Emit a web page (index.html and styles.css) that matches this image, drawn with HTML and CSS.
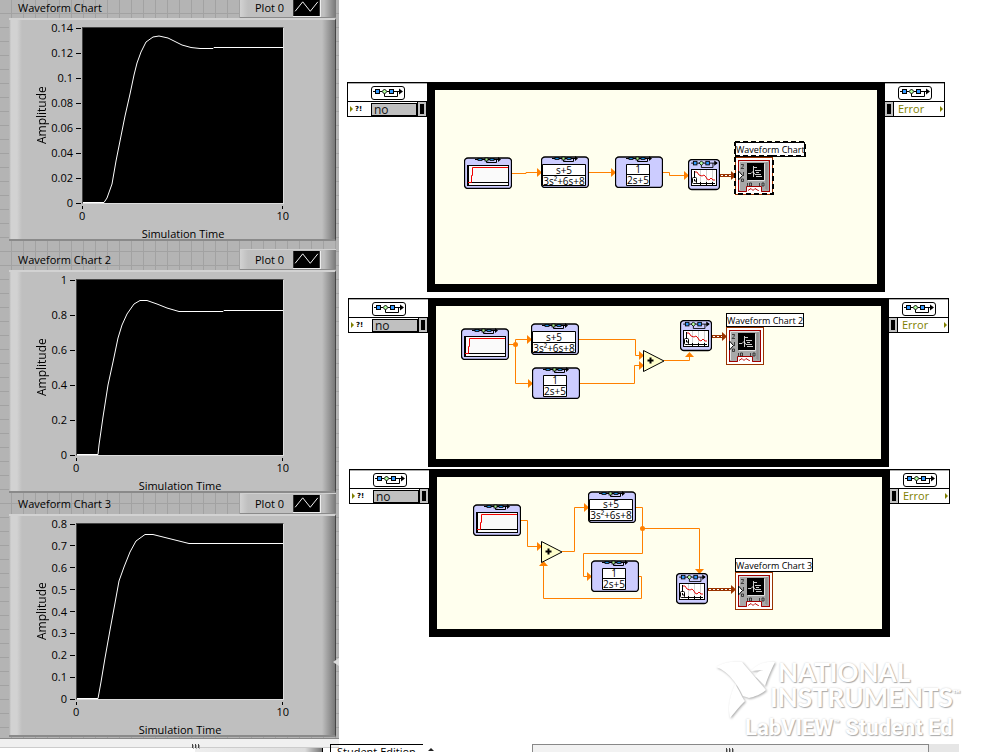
FILE: index.html
```html
<!DOCTYPE html>
<html lang="en">
<head>
<meta charset="utf-8">
<title>LabVIEW Simulation</title>
<link rel="stylesheet" href="styles.css">
</head>
<body>
<svg class="defs" aria-hidden="true">
  <defs>
    <symbol id="chain" viewBox="0 0 30 9">
      <path d="M0 3.500H29M11.500 3.500V8.500H24.500V3.500" fill="none" stroke="#000"/>
      <path d="M26 0.500L30 3.500L26 6.500Z"/>
      <rect x="2.500" y="1.500" width="4" height="4" fill="#3399ff" stroke="#000"/>
      <rect x="16.500" y="1.500" width="4" height="4" fill="#3399ff" stroke="#000"/>
      <path d="M11.500 1L14 3.500L11.500 6L9 3.500Z" fill="#b4ffa0" stroke="#000"/>
    </symbol>
    <symbol id="chain-box" viewBox="0 0 34 14">
      <rect x="0.500" y="0.500" width="33" height="13" rx="2.500" fill="#fff" stroke="#000"/>
      <use href="#chain" x="2" y="2" width="30" height="9"/>
    </symbol>
    <symbol id="block" viewBox="0 0 48 32">
      <rect x="0.500" y="1" width="47" height="30.500" rx="3.500" fill="#ccccff" stroke="#000" stroke-width="1.300"/>
      <path d="M11 2.500H36M22.500 3V5.500H32.500V3" fill="none" stroke="#000"/>
      <rect x="14" y="1.500" width="4" height="2" fill="#1684d8" stroke="#000" stroke-width="0.800"/>
      <rect x="26" y="1.500" width="4" height="2" fill="#1684d8" stroke="#000" stroke-width="0.800"/>
      <rect x="21" y="1" width="3" height="3" fill="#a4e68a" stroke="#000" stroke-width="0.800"/>
      <path d="M34 0L37 2.500L34 5Z"/>
    </symbol>
    <symbol id="step" viewBox="0 0 48 32">
      <use href="#block" width="48" height="32"/>
      <rect x="3.500" y="8.500" width="41" height="20" fill="#fafafa" stroke="#000"/>
      <path d="M4.500 8V29M4 25.500H44" fill="none" stroke="#000"/>
      <path d="M4 25.500H7.500V18.500H8.500V10.500H44" fill="none" stroke="#f00000"/>
    </symbol>
    <symbol id="scope" viewBox="0 0 32 32">
      <rect x="0.500" y="0.500" width="31" height="30" rx="3.500" fill="#ccccff" stroke="#000" stroke-width="1.300"/>
      <use href="#chain" x="3" y="1" width="27" height="8"/>
      <rect x="3.500" y="10.500" width="25" height="16" fill="#fff" stroke="#000"/>
      <path d="M12.500 11V24M18.500 11V24M24.500 11V24" stroke="#d0d0d0"/>
      <path d="M6.500 12V25M7 24.500H27M12.500 23V26M18.500 23V26M24.500 23V26" stroke="#000"/>
      <path d="M7 13L9 13L11 16L14 17L16 16L18 18L19 20L21 21L23 19L25 21H27" fill="none" stroke="#e01010"/>
      <rect x="4.500" y="18.500" width="4" height="6" rx="1" fill="#fff" stroke="#000"/>
      <path d="M6.500 20V22H8" fill="none" stroke="#000"/>
    </symbol>
    <symbol id="terminal" viewBox="0 0 38 38">
      <rect x="0.500" y="0.500" width="37" height="37" fill="#fff" stroke="#993300"/>
      <rect x="3.500" y="3.500" width="31" height="31" fill="#a8a8a8" stroke="#a00000"/>
      <path d="M4.500 33V4.500H33" fill="none" stroke="#e0e0e0"/>
      <path d="M32 5V33M31 6V32" fill="none" stroke="#888"/>
      <rect x="12" y="6" width="17" height="17" fill="#000"/>
      <path d="M29.500 7V23.500H13" fill="none" stroke="#ddd"/>
      <path d="M13 16.500H16L18 14.500L20 17.500H26M18.500 9V20M19 10.500H22M20 13.500H26M21 15.500H24M21 19.500H27" fill="none" stroke="#fff" stroke-width="0.800"/>
      <path d="M6 7.500H8.500L8 9.500L6 11.500H9M8.500 15V19M6.500 24.500H8.500V22H6.500ZM12.500 26V29M14.500 26H16.500V29H14.500ZM24.500 26V29M27 26H29V29H27Z" fill="none" stroke="#222" stroke-width="0.800"/>
      <path d="M3.500 14L7.500 18.500L3.500 23Z" fill="#fff" stroke="#000"/>
      <path d="M11.500 34.500V29.500H26.500V34.500" fill="#fff" stroke="#a00000"/>
      <path d="M13 33.500L16 31.500L18 33.500L20 31.500L24 34" fill="none" stroke="#c01010"/>
      <path d="M12 34.500H26" stroke="#fff"/>
    </symbol>
    <symbol id="sum" viewBox="0 0 22 22">
      <path d="M0.500 0.500L21 11L0.500 21.500Z" fill="#ffffcc" stroke="#000"/>
      <path d="M4.500 10.500H10.500M7.500 7.500V13.500" stroke="#000" stroke-width="2"/>
    </symbol>
    <symbol id="legend-line" viewBox="0 0 28 18">
      <rect width="28" height="18" fill="#000"/>
      <path d="M2 13L10 3L18 13L26 3" fill="none" stroke="#fff"/>
    </symbol>
    <symbol id="grip" viewBox="0 0 9 5">
      <path d="M0.500 0V4M3.500 0V4M6.500 0V4" stroke="#444"/>
      <path d="M1.500 1V5M4.500 1V5M7.500 1V5" stroke="#aaa"/>
    </symbol>
  </defs>
</svg>

<div class="workspace">
  <main class="front-panel">
    <section class="chart chart-first">
      <header class="chart-head">
        <h2 class="chart-title">Waveform Chart</h2>
        <div class="legend"><span>Plot 0</span><svg class="legend-line"><use href="#legend-line"/></svg></div>
      </header>
      <div class="chart-body wide-scale">
        <div class="y-label">Amplitude</div>
        <ol class="y-scale"><li>0.14</li><li>0.12</li><li>0.1</li><li>0.08</li><li>0.06</li><li>0.04</li><li>0.02</li><li>0</li></ol>
        <svg class="plot" viewBox="83 28 200 175" preserveAspectRatio="none"><path d="M83 202.500H104L107 198L112 184L116 161L120 141L125 116L130 94L134 75L137 63L141 52L146 42L153 37L159 36L168 38L174 41L182 45L191 47.500L200 48.500H213L214 47.500H283"/></svg>
        <div class="x-scale"><span>0</span><span>10</span></div>
        <div class="x-label">Simulation Time</div>
      </div>
    </section>
    <section class="chart">
      <header class="chart-head">
        <h2 class="chart-title">Waveform Chart 2</h2>
        <div class="legend"><span>Plot 0</span><svg class="legend-line"><use href="#legend-line"/></svg></div>
      </header>
      <div class="chart-body">
        <div class="y-label">Amplitude</div>
        <ol class="y-scale"><li>1</li><li>0.8</li><li>0.6</li><li>0.4</li><li>0.2</li><li>0</li></ol>
        <svg class="plot" viewBox="77 280 206 175" preserveAspectRatio="none"><path d="M77 454.500H98L99 445L103 417L108 385L113 362L118 338L122 325L127 314L134 304L140 300.500H147L157 304L167 308L179 311.500H223L224 310.500H283"/></svg>
        <div class="x-scale"><span>0</span><span>10</span></div>
        <div class="x-label">Simulation Time</div>
      </div>
    </section>
    <section class="chart chart-last">
      <header class="chart-head">
        <h2 class="chart-title">Waveform Chart 3</h2>
        <div class="legend"><span>Plot 0</span><svg class="legend-line"><use href="#legend-line"/></svg></div>
      </header>
      <div class="chart-body">
        <div class="y-label">Amplitude</div>
        <ol class="y-scale"><li>0.8</li><li>0.7</li><li>0.6</li><li>0.5</li><li>0.4</li><li>0.3</li><li>0.2</li><li>0.1</li><li>0</li></ol>
        <svg class="plot" viewBox="77 524 206 175" preserveAspectRatio="none"><path d="M77 698.500H98L101 682L105 658L110 630L115 603L119 581L124 567L130 552L136 541L145 534.500H153L167 538L189 543.500H283"/></svg>
        <div class="x-scale"><span>0</span><span>10</span></div>
        <div class="x-label">Simulation Time</div>
      </div>
    </section>
    <svg class="splitter" viewBox="0 0 6 8"><path d="M6 0L0 4L6 8Z" fill="#ddd"/></svg>
  </main>

  <section class="diagram">
    <article class="loop loop-1">
      <div class="node">
        <div class="node-top"><svg class="node-icon"><use href="#chain-box"/></svg></div>
        <div class="node-row"><i class="pin"></i><span class="mark">?!</span><input class="value" value="no" aria-label="Error in, loop 1"><span class="handle"></span></div>
      </div>
      <div class="frame">
        <svg viewBox="435 90 442 194">
          <g class="wire"><path d="M512 173.500H526V172.500H538M589 172.500H612M663 172.500H669.500V175.500H685"/></g>
          <g class="arrow"><path d="M537 168V177L542 172.500Z"/><path d="M611 168V177L616 172.500Z"/><path d="M684 171V180L689 175.500Z"/></g>
          <path class="bus" d="M720 175.500H732"/><path class="bus-dots" d="M721 175.500H732"/><path class="bus-head" d="M731 171V180L736 175.500Z"/>
          <use href="#step" x="464" y="157" width="48" height="32"/>
          <use href="#block" x="541" y="156" width="48" height="32"/>
          <path class="cell" d="M542.500 164.500H585.500V185.500H542.500ZM542 175.500H586"/>
          <text class="term" x="564" y="174">s+5</text><text class="term" x="564" y="185">3s²+6s+8</text>
          <use href="#block" x="615" y="156" width="48" height="32"/>
          <path class="cell" d="M626.500 164.500H649.500V185.500H626.500ZM626 174.500H650"/>
          <text class="term" x="638" y="173">1</text><text class="term" x="638" y="184">2s+5</text>
          <use href="#scope" x="688" y="159" width="32" height="32"/>
          <use href="#terminal" x="735" y="157" width="38" height="38"/>
          <rect class="tag" x="735.500" y="142.500" width="69" height="14"/><text class="tag-text" x="736" y="153">Waveform Chart</text>
          <path class="selection" d="M735 142H805V156H773V194H735V142M735 156H773"/>
        </svg>
      </div>
      <div class="node node-out">
        <div class="node-top"><svg class="node-icon"><use href="#chain-box"/></svg></div>
        <div class="node-row"><span class="handle"></span><span class="error">Error</span><i class="pin"></i></div>
      </div>
    </article>

    <article class="loop loop-2">
      <div class="node">
        <div class="node-top"><svg class="node-icon"><use href="#chain-box"/></svg></div>
        <div class="node-row"><i class="pin"></i><span class="mark">?!</span><input class="value" value="no" aria-label="Error in, loop 2"><span class="handle"></span></div>
      </div>
      <div class="frame">
        <svg viewBox="436 306 445 153">
          <g class="wire"><path d="M509 344.500H515.500M528 339.500H515.500V383.500H529M579 339.500H635.500V355.500H640M580 383.500H634.500V365.500H640M664 360.500H689.500V356"/></g>
          <g class="arrow"><circle cx="515.500" cy="344.500" r="2.500"/><path d="M527 335V344L532 339.500Z"/><path d="M528 379V388L533 383.500Z"/><path d="M639 351V360L644 355.500Z"/><path d="M639 361V370L644 365.500Z"/><path d="M685 357H694L689.500 352Z"/></g>
          <path class="bus" d="M712 336.500H723"/><path class="bus-dots" d="M713 336.500H723"/><path class="bus-head" d="M722 332V341L727 336.500Z"/>
          <use href="#step" x="461" y="328" width="48" height="32"/>
          <use href="#block" x="531" y="323" width="48" height="32"/>
          <path class="cell" d="M532.500 331.500H575.500V352.500H532.500ZM532 342.500H576"/>
          <text class="term" x="554" y="341">s+5</text><text class="term" x="554" y="352">3s²+6s+8</text>
          <use href="#block" x="532" y="367" width="48" height="32"/>
          <path class="cell" d="M543.500 375.500H566.500V396.500H543.500ZM543 385.500H567"/>
          <text class="term" x="555" y="384">1</text><text class="term" x="555" y="395">2s+5</text>
          <use href="#sum" x="643" y="350" width="22" height="22"/>
          <use href="#scope" x="680" y="320" width="32" height="32"/>
          <use href="#terminal" x="726" y="327" width="38" height="38"/>
          <rect class="tag" x="726.500" y="313.500" width="77" height="13"/><text class="tag-text" x="727" y="324">Waveform Chart 2</text>
        </svg>
      </div>
      <div class="node node-out">
        <div class="node-top"><svg class="node-icon"><use href="#chain-box"/></svg></div>
        <div class="node-row"><span class="handle"></span><span class="error">Error</span><i class="pin"></i></div>
      </div>
    </article>

    <article class="loop loop-3">
      <div class="node">
        <div class="node-top"><svg class="node-icon"><use href="#chain-box"/></svg></div>
        <div class="node-row"><i class="pin"></i><span class="mark">?!</span><input class="value" value="no" aria-label="Error in, loop 3"><span class="handle"></span></div>
      </div>
      <div class="frame">
        <svg viewBox="437 477 445 152">
          <g class="wire"><path d="M521 520.500H527.500V546.500H538M562 551.500H574.500V507.500H585M636 507.500H642.500V553.500H583.500V576.500H588M642.500 528.500H699.500V570M639 576.500H641.500V598.500H543.500V566"/></g>
          <g class="arrow"><circle cx="642.500" cy="528.500" r="2.500"/><path d="M537 542V551L542 546.500Z"/><path d="M584 503V512L589 507.500Z"/><path d="M587 572V581L592 576.500Z"/><path d="M695 569H704L699.500 574Z"/><path d="M539 566H548L543.500 561Z"/></g>
          <path class="bus" d="M708 589.500H732"/><path class="bus-dots" d="M709 589.500H732"/><path class="bus-head" d="M731 585V594L736 589.500Z"/>
          <use href="#step" x="473" y="504" width="48" height="32"/>
          <use href="#block" x="588" y="491" width="48" height="32"/>
          <path class="cell" d="M589.500 499.500H632.500V520.500H589.500ZM589 509.500H633"/>
          <text class="term" x="611" y="508">s+5</text><text class="term" x="611" y="519">3s²+6s+8</text>
          <use href="#block" x="591" y="560" width="48" height="32"/>
          <path class="cell" d="M602.500 568.500H625.500V589.500H602.500ZM602 578.500H626"/>
          <text class="term" x="614" y="577">1</text><text class="term" x="614" y="588">2s+5</text>
          <use href="#sum" x="541" y="541" width="22" height="22"/>
          <use href="#scope" x="676" y="573" width="32" height="32"/>
          <use href="#terminal" x="735" y="572" width="38" height="38"/>
          <rect class="tag" x="735.500" y="558.500" width="77" height="13"/><text class="tag-text" x="736" y="569">Waveform Chart 3</text>
        </svg>
      </div>
      <div class="node node-out">
        <div class="node-top"><svg class="node-icon"><use href="#chain-box"/></svg></div>
        <div class="node-row"><span class="handle"></span><span class="error">Error</span><i class="pin"></i></div>
      </div>
    </article>

    <div class="watermark">
      <svg class="eagle" viewBox="0 0 64 62"><path d="M1 8C8 3 18 2 27 3L51 31C47 35 39 38 34 39L28 37C24 28 14 12 1 8ZM36 12C43 4 52 2 60 3C56 11 52 20 50 27L40 17C42 13 45 11 49 11ZM20 25C26 34 27 39 30 42C24 48 20 53 15 59C12 47 16 35 20 25Z"/></svg>
      <div class="brand"><span>NATIONAL</span><span class="brand-2">INSTRUMENTS<sup>™</sup></span></div>
      <div class="edition">LabVIEW<sup>™</sup> Student Ed</div>
    </div>
  </section>
</div>

<footer class="bars">
  <div class="left-bar"><div class="left-scroll"><svg class="grip"><use href="#grip"/></svg></div><div class="left-edge"></div></div>
  <div class="right-bar"><span class="status">Student Edition</span><span class="caret"></span><div class="right-scroll"><div class="thumb"><svg class="grip"><use href="#grip"/></svg></div></div></div>
</footer>
</body>
</html>
```
FILE: styles.css
```css
* { box-sizing: border-box; }
body {
  margin: 0;
  height: 100vh;
  overflow: hidden;
  background: #fff;
  color: #000;
  font: 12px/14px "Open Sans", "Noto Sans", sans-serif;
}
svg { display: block; }
.defs { position: absolute; width: 0; height: 0; }

.workspace {
  display: grid;
  grid-template-columns: 339px 1fr;
}

/* Front panel */
.front-panel {
  position: relative;
  padding: 0 3px 0 9px;
  height: 738px;
  background:
    repeating-linear-gradient(90deg, transparent 0 11px, #a2a2a2 11px 12px),
    repeating-linear-gradient(#b4b4b4 0 13px, #a2a2a2 13px 14px);
}
.chart { padding-top: 8px; }
.chart-first { padding-top: 0; margin-top: -3px; }
.chart-last { padding-top: 0; }
.chart-head { display: flex; justify-content: space-between; height: 21px; }
.chart-title { margin: 0; padding: 4px 9px; font-size: 11px; font-weight: 400; line-height: 14px; }
.legend {
  display: flex;
  align-items: center;
  gap: 9px;
  width: 96px;
  padding-left: 15px;
  font-size: 11px;
  background: linear-gradient(90deg, #d2d2d2, #bfbfbf 8px, #bfbfbf 84px, #777);
  border-top: 1px solid #d0d0d0;
  border-bottom: 1px solid #8a8a8a;
}
.legend-line { width: 28px; height: 18px; border: 1px solid #eee; border-width: 0 1px 1px 0; }
.chart-body {
  display: grid;
  grid-template-columns: 40px 27px 1fr;
  grid-template-rows: 177px 19px 18px;
  padding: 7px 51px 0 0;
  height: 223px;
  background: linear-gradient(90deg, #b0b0b0, #d2d2d2 2px, #d2d2d2 8px, #bfbfbf 13px, #bfbfbf 313px, #777 326px);
  border-top: 2px solid #d2d2d2;
  border-bottom: 2px solid #8a8a8a;
  border-right: 1px solid #444;
}
.wide-scale { grid-template-columns: 40px 33px 1fr; }
.y-label {
  writing-mode: vertical-rl;
  transform: rotate(180deg);
  text-align: center;
  justify-self: end;
  line-height: 14px;
}
.y-scale {
  display: flex;
  flex-direction: column;
  justify-content: space-between;
  margin: -6px 0;
  padding: 0 1px 0 0;
  list-style: none;
  font-size: 11px;
  text-align: right;
}
.y-scale li { display: flex; align-items: center; justify-content: flex-end; gap: 3px; height: 14px; }
.y-scale li::after { content: ""; width: 5px; height: 1px; background: #000; }
.plot {
  width: 100%;
  height: 177px;
  background: #000;
  border: 1px solid #444;
  border-bottom-color: #ddd;
  border-right-color: #ddd;
}
.plot path { fill: none; stroke: #fff; stroke-width: 1; }
.x-scale { grid-column: 3; display: flex; justify-content: space-between; padding-top: 2px; margin: 0 -5px 0 -3px; font-size: 11px; }
.x-scale span { display: flex; flex-direction: column; align-items: center; }
.x-scale span::before { content: ""; width: 1px; height: 4px; background: #000; }
.x-label { grid-column: 3; text-align: center; font-size: 11px; padding-top: 4px; }
.splitter { position: absolute; right: 0; top: 658px; width: 6px; height: 8px; }

/* Block diagram */
.diagram { position: relative; overflow: hidden; }
.loop { position: absolute; display: flex; align-items: flex-start; }
.loop-1 { left: 8px; top: 82px; }
.loop-2 { left: 9px; top: 298px; }
.loop-3 { left: 10px; top: 469px; }
.frame { border: 8px solid #000; background: #ffffee; }
.loop-1 .frame svg { width: 442px; height: 194px; }
.loop-2 .frame svg { width: 445px; height: 153px; }
.loop-3 .frame svg { width: 445px; height: 152px; }
.node { width: 80px; height: 35px; border: 1px solid #000; border-right: 0; background: #fff; }
.node-out { width: 60px; border-right: 1px solid #000; border-left: 0; }
.node-top { display: flex; height: 19px; justify-content: center; align-items: center; border-top: 1px solid #aaa; border-bottom: 1px solid #000; }
.node-icon { width: 34px; height: 14px; }
.node-row { display: flex; align-items: center; height: 14px; }
.pin { width: 0; height: 0; border: 3px solid transparent; border-left: 3px solid #808000; border-right: 0; margin-left: 2px; }
.mark { width: 17px; padding-left: 2px; font: 700 7px/14px "DejaVu Sans", sans-serif; }
.value {
  width: 46px;
  height: 13px;
  margin: 0 1px;
  padding: 0 2px;
  border: 1px solid #000;
  border-radius: 0;
  background: #c0c0c0;
  color: #111;
  font: 12px/12px "Open Sans", sans-serif;
}
.handle { width: 8px; height: 14px; background: #000; border: 2px solid #c0c0c0; outline: 1px solid #000; }
.error { flex: 1; padding-left: 5px; color: #808000; font-size: 11px; }
.node-out .pin { margin-right: 1px; }

.wire { fill: none; stroke: #ff8000; }
.arrow { fill: #ff8000; }
.bus { stroke: #993300; stroke-width: 3; }
.bus-dots { stroke: #fff; stroke-dasharray: 2 2; }
.bus-head { fill: #993300; }
.cell { fill: #fff; stroke: #000; }
.term { font: 10px "Open Sans", sans-serif; text-anchor: middle; }
.tag { fill: #fff; stroke: #000; }
.tag-text { font: 9px "Open Sans", sans-serif; }
.selection { fill: none; stroke: #000; stroke-width: 2; stroke-dasharray: 5 3; }

.watermark {
  position: absolute;
  left: 376px;
  top: 657px;
  width: 250px;
  height: 86px;
  color: #fff;
  text-shadow: 1px 1px 1px #aaa, 0 0 2px #ccc;
  white-space: nowrap;
}
.eagle { position: absolute; left: 0; top: 2px; width: 64px; height: 62px; fill: #fff; filter: drop-shadow(1px 1px 1px #aaa); }
.brand { display: flex; flex-direction: column; padding-left: 63px; font: 700 26px/25px Lato, sans-serif; padding-top: 3px; }
.brand-2 { margin-left: -8px; }
.watermark sup { font-size: 10px; line-height: 0; }
.edition { padding-left: 30px; font: 700 22px/36px Roboto, "Liberation Sans", sans-serif; }

/* Bottom bars */
.bars { display: grid; grid-template-columns: 323px 1fr; height: 14px; }
.left-scroll { display: flex; justify-content: center; height: 10px; padding: 5px 0 0 53px; margin-right: -16px; background: #f0f0f0; border-top: 1px solid #888; border-bottom: 1px solid #ccc; }
.left-edge { margin-left: 195px; height: 4px; background: linear-gradient(90deg, #eee, #ddd 110px, #777); border-right: 1px solid #000; }
.grip { width: 9px; height: 5px; }
.right-bar { display: flex; align-items: flex-start; padding: 6px 32px 0 7px; }
.status { height: 8px; width: 93px; padding-left: 6px; border-left: 1px solid #000; border-top: 1px solid #000; overflow: hidden; font-size: 11px; line-height: 14px; }
.caret { width: 0; height: 0; margin: 4px 98px 0 5px; border: 3px solid transparent; border-bottom-color: #222; border-top: 0; }
.right-scroll { flex: 1; height: 8px; background: #e6e6e6; }
.thumb { display: flex; justify-content: center; width: 93%; height: 8px; padding-top: 3px; background: #f2f2f2; border: 1px solid #888; border-bottom: 0; }
```
